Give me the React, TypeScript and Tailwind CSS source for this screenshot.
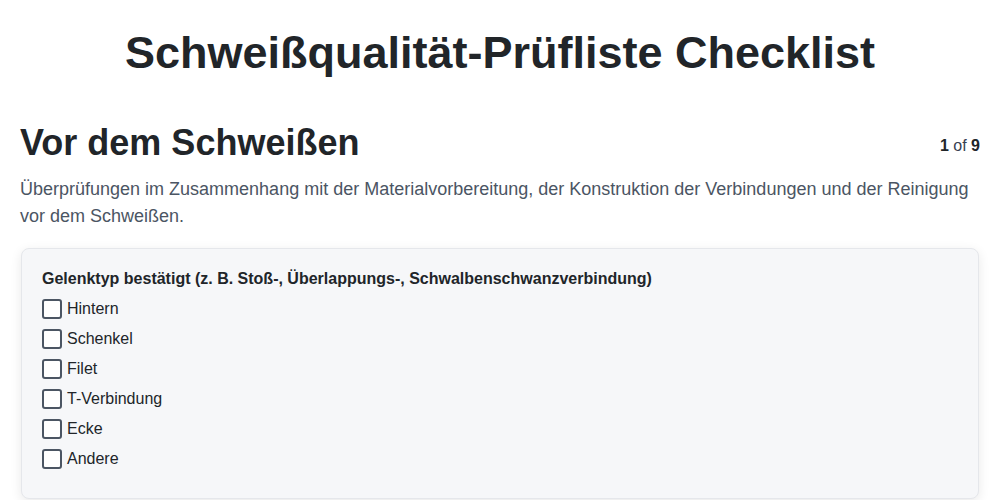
import React from "react";

const options = ["Hintern", "Schenkel", "Filet", "T-Verbindung", "Ecke", "Andere"];

export default function App() {
  return (
    <div
      className="min-h-screen bg-white text-[#212529]"
      style={{ fontFamily: '"Liberation Sans", Arial, sans-serif' }}
    >
      <div className="mx-auto max-w-[1000px] px-5">
        <h1 className="pt-[26px] text-center text-[45px] font-bold leading-[54px] text-[#212529]">
          Schweißqualität-Prüfliste Checklist
        </h1>
        <div className="mt-[43px] flex items-center justify-between">
          <h2 className="text-4xl font-bold leading-10 text-[#212529]">Vor dem Schweißen</h2>
          <div className="mt-[5px] text-base leading-6 text-[#374151]">
            <span className="font-bold text-[#212529]">1</span> of{" "}
            <span className="font-bold text-[#212529]">9</span>
          </div>
        </div>
        <p className="mt-[13px] text-lg leading-[27px] text-[#4b5563]">
          Überprüfungen im Zusammenhang mit der Materialvorbereitung, der Konstruktion der
          Verbindungen und der Reinigung vor dem Schweißen.
        </p>
        <div className="mx-px mt-[18px] rounded-lg border border-[#e5e7eb] bg-[#f6f7f9] px-5 pb-[27px] pt-[18px] shadow-[0_3px_12px_rgba(0,0,0,0.09)]">
          <div className="text-base font-bold leading-6 text-[#212529]">
            Gelenktyp bestätigt (z. B. Stoß-, Überlappungs-, Schwalbenschwanzverbindung)
          </div>
          <div className="mt-1.5 flex flex-col gap-1.5">
            {options.map((o) => (
              <label key={o} className="flex items-center gap-[5px] leading-6">
                <span className="h-5 w-5 shrink-0 rounded-[3px] border-2 border-[#4b5563] bg-white" />
                <span className="text-base text-[#212529]">{o}</span>
              </label>
            ))}
          </div>
        </div>
      </div>
    </div>
  );
}
